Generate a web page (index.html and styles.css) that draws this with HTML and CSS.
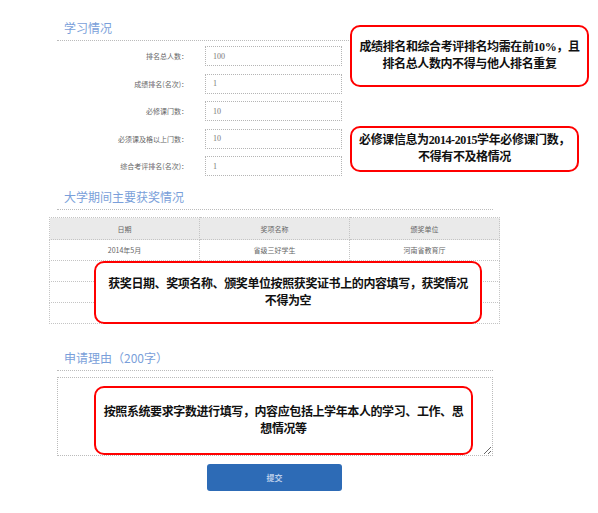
FILE: index.html
```html
<!DOCTYPE html>
<html lang="zh-CN">
<head>
    <meta charset="UTF-8">
    <meta name="viewport" content="width=device-width, initial-scale=1.0">
    <title>奖学金申请</title>
    <link rel="stylesheet" href="styles.css">
</head>
<body>
<div class="page">

    <!-- 学习情况 -->
    <h2 class="section-title first">学习情况</h2>
    <div class="form">
        <div class="form-row">
            <label class="form-label">排名总人数：</label>
            <input class="form-input" type="text" value="100">
        </div>
        <div class="form-row">
            <label class="form-label">成绩排名(名次)：</label>
            <input class="form-input" type="text" value="1">
        </div>
        <div class="form-row">
            <label class="form-label">必修课门数：</label>
            <input class="form-input" type="text" value="10">
        </div>
        <div class="form-row">
            <label class="form-label">必须课及格以上门数：</label>
            <input class="form-input" type="text" value="10">
        </div>
        <div class="form-row">
            <label class="form-label">综合考评排名(名次)：</label>
            <input class="form-input" type="text" value="1">
        </div>
    </div>

    <!-- 获奖情况 -->
    <h2 class="section-title second">大学期间主要获奖情况</h2>
    <table class="award-table">
        <tr>
            <th>日期</th>
            <th>奖项名称</th>
            <th>颁奖单位</th>
        </tr>
        <tr>
            <td>2014年5月</td>
            <td>省级三好学生</td>
            <td>河南省教育厅</td>
        </tr>
        <tr><td></td><td></td><td></td></tr>
        <tr><td></td><td></td><td></td></tr>
        <tr><td></td><td></td><td></td></tr>
    </table>

    <!-- 申请理由 -->
    <h2 class="section-title third">申请理由（200字）</h2>
    <textarea class="reason"></textarea>
    <button class="submit">提交</button>

    <!-- callouts -->
    <div class="note note-rank">
        <span>成绩排名和综合考评排名均需在前10%，且</span>
        <span>排名总人数内不得与他人排名重复</span>
    </div>
    <div class="note note-course">
        <span>必修课信息为2014-2015学年必修课门数，</span>
        <span>不得有不及格情况</span>
    </div>
    <div class="note note-award">
        <span>获奖日期、奖项名称、颁奖单位按照获奖证书上的内容填写，获奖情况</span>
        <span>不得为空</span>
    </div>
    <div class="note note-reason">
        <span>按照系统要求字数进行填写，内容应包括上学年本人的学习、工作、思</span>
        <span>想情况等</span>
    </div>
</div>
</body>
</html>
```

FILE: styles.css
```css
body {
    margin: 0;
    background-color: #fff;
    font-family: "Noto Sans CJK SC", sans-serif;
}

.page {
    position: relative;
    width: 436px;
    margin-left: 57px;
    display: flex;
    flex-direction: column;
}

.section-title {
    margin: 0;
    padding: 0 0 2px 7px;
    font-size: 12px;
    font-weight: normal;
    line-height: 20px;
    color: #7a9fda;
    border-bottom: 1px dotted #bbb;
}
.section-title.first {
    margin-top: 18px;
}
.section-title.second {
    margin-top: 11px;
}
.section-title.third {
    margin-top: 24px;
}

.form {
    display: flex;
    flex-direction: column;
    gap: 7.5px;
    margin-top: 5px;
}
.form-row {
    display: flex;
    align-items: center;
    gap: 17px;
}
.form-label {
    width: 131px;
    text-align: right;
    font-size: 7px;
    color: #666;
}
.form-input {
    box-sizing: border-box;
    width: 137px;
    height: 20px;
    padding: 0 0 0 7px;
    border: 1px dotted #b5b5b5;
    font-family: "Liberation Serif", serif;
    font-size: 8px;
    color: #777;
    outline: none;
}

.award-table {
    width: 451px;
    margin: 7px 0 0 -8px;
    border-collapse: collapse;
    table-layout: fixed;
    font-size: 7px;
    color: #666;
}
.award-table th,
.award-table td {
    height: 20px;
    padding: 0;
    border: 1px dotted #c4c4c4;
    text-align: center;
    font-weight: normal;
}
.award-table th {
    height: 21px;
    background-color: #fff;
    background-image: repeating-conic-gradient(#d4d4d4 0 25%, #fff 0 50%);
    background-size: 2px 2px;
}

.reason {
    box-sizing: border-box;
    width: 436px;
    height: 79px;
    margin: 6px 0 0;
    border: 1px dotted #bbb;
    resize: vertical;
}

.submit {
    width: 135px;
    height: 27px;
    margin: 8px 0 0 150px;
    border: none;
    border-radius: 3px;
    background-color: #2d6bb6;
    color: #b9cdea;
    font-family: "Noto Sans CJK SC", sans-serif;
    font-size: 8px;
    font-weight: bold;
}

.note {
    position: absolute;
    box-sizing: border-box;
    display: flex;
    flex-direction: column;
    align-items: center;
    justify-content: center;
    border: 2px solid #f00;
    border-radius: 10px;
    background-color: #fff;
    font-family: "Liberation Serif", "Noto Sans CJK SC", serif;
    font-size: 12px;
    font-weight: bold;
    line-height: 17px;
    letter-spacing: -0.4px;
    color: #111;
    white-space: nowrap;
}
.note-rank {
    left: 293px;
    top: 25px;
    width: 239px;
    height: 62px;
}
.note-course {
    left: 293px;
    top: 126px;
    width: 229px;
    height: 46px;
}
.note-award {
    left: 37px;
    top: 261px;
    width: 388px;
    height: 63px;
}
.note-reason {
    left: 37px;
    top: 386px;
    width: 379px;
    height: 69px;
}
```
